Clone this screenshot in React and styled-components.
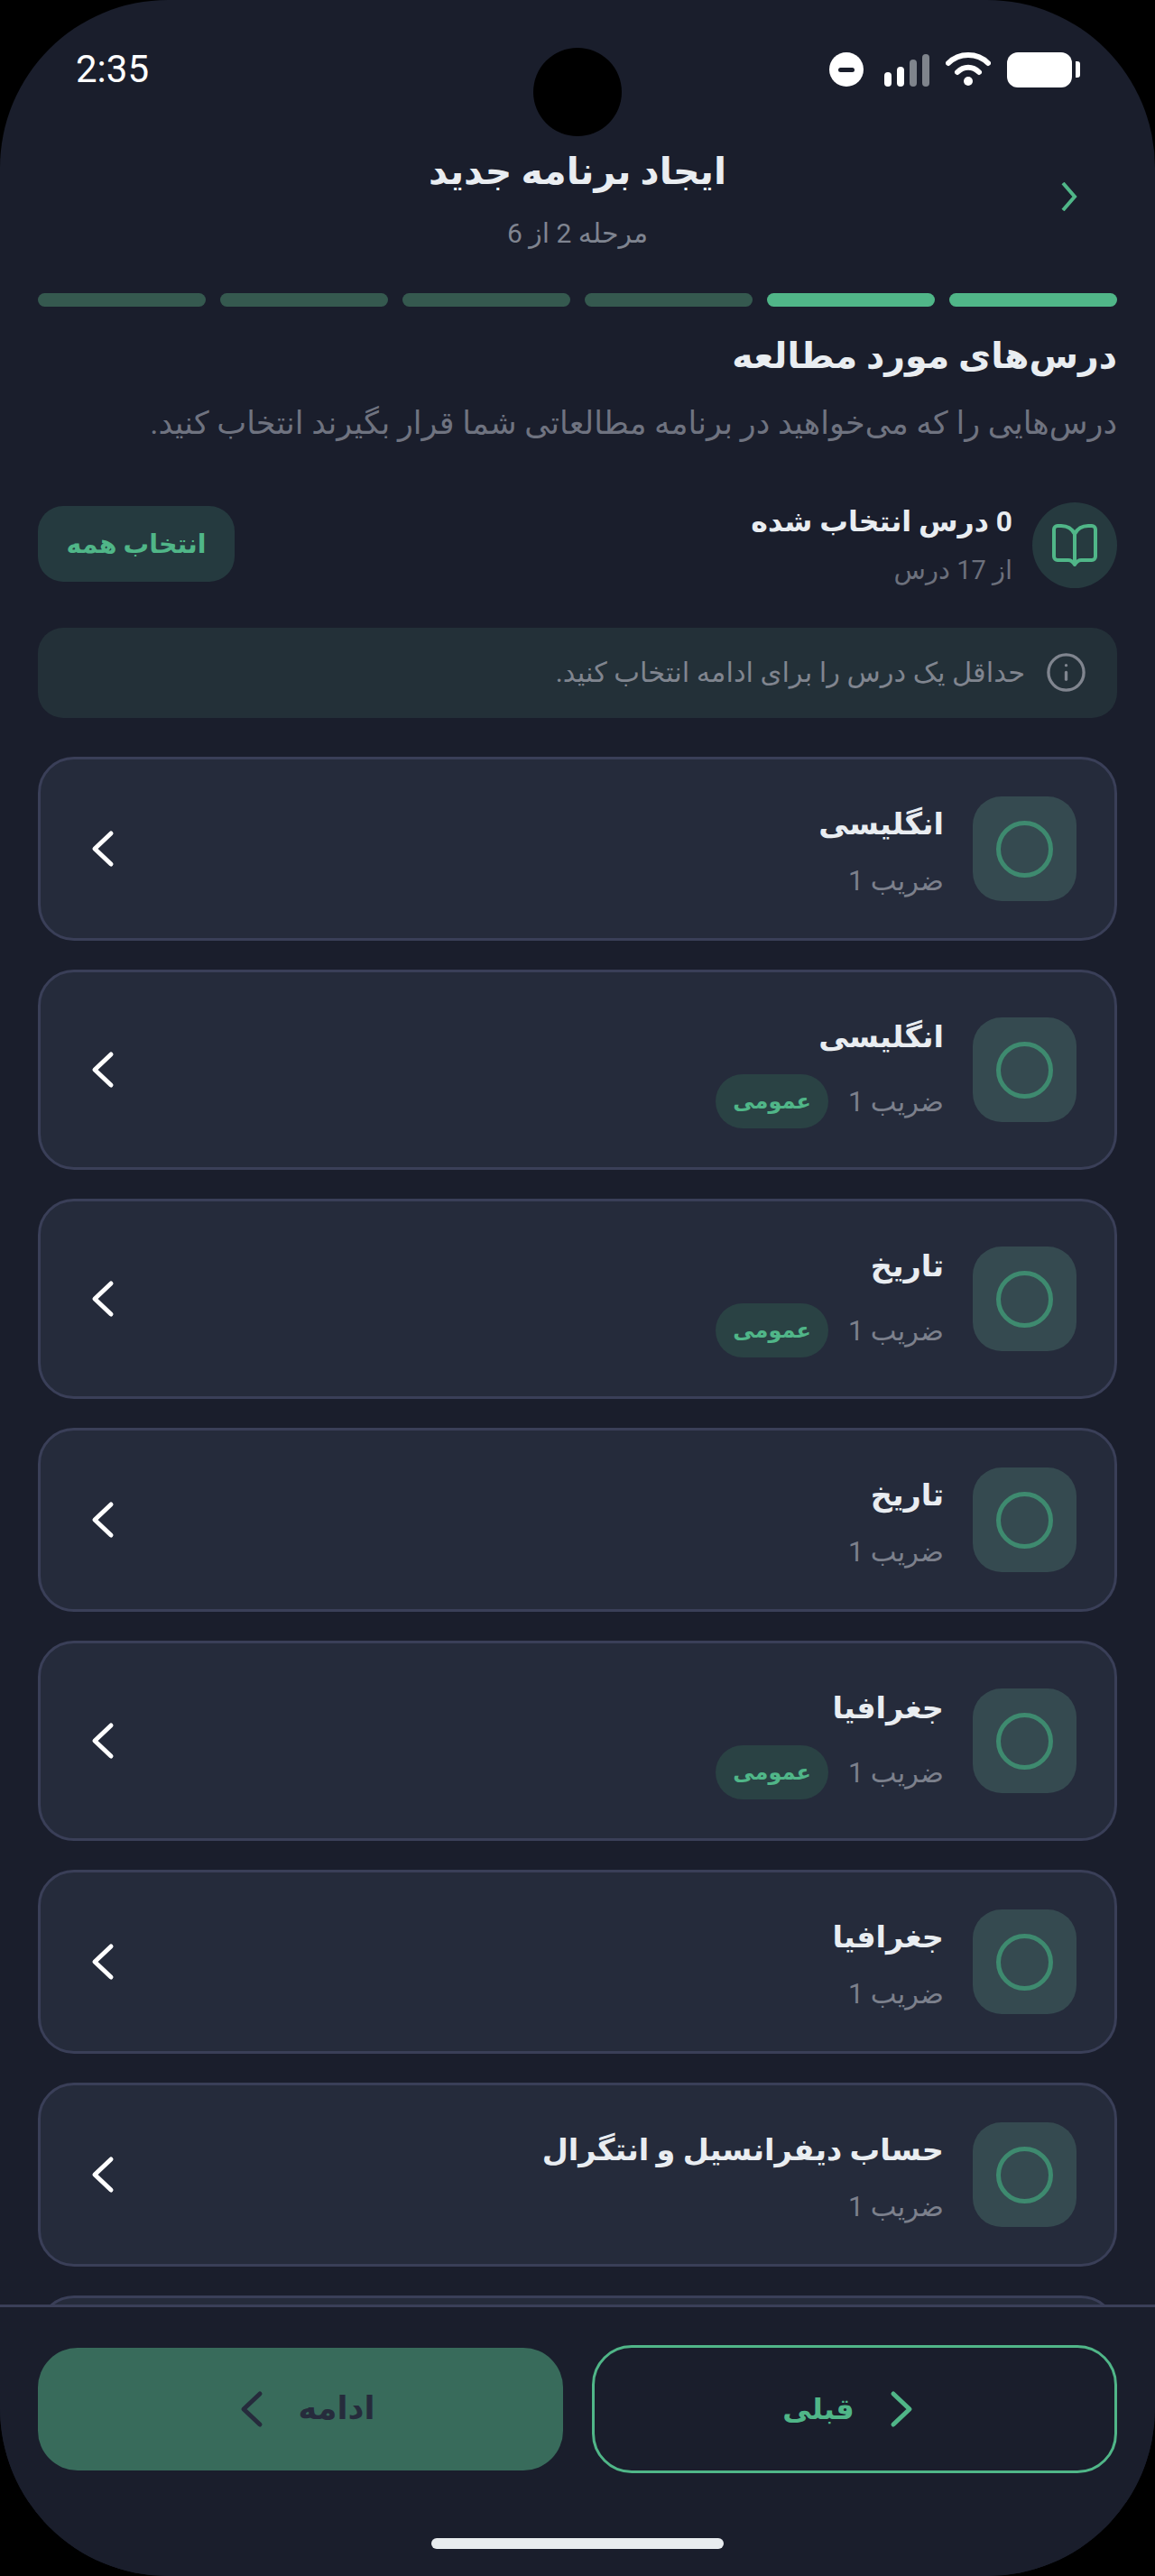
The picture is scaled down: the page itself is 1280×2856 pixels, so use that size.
import styled, { createGlobalStyle } from "styled-components";
import { Info } from "lucide-react";

const GlobalStyle = createGlobalStyle`
  html, body {
    margin: 0;
    padding: 0;
    background: #000;
  }
  * {
    box-sizing: border-box;
  }
`;

const FONT = `Roboto, "DejaVu Sans", sans-serif`;

const Screen = styled.div`
  position: relative;
  width: 1280px;
  height: 2856px;
  display: flex;
  flex-direction: column;
  overflow: hidden;
  background: #1a1e2c;
  border-radius: 186px;
  font-family: ${FONT};
  color: #e9edf1;
  direction: rtl;
`;

const Camera = styled.div`
  position: absolute;
  top: 53px;
  left: 591px;
  width: 98px;
  height: 98px;
  border-radius: 50%;
  background: #000;
`;

const StatusBar = styled.div`
  direction: ltr;
  height: 160px;
  flex-shrink: 0;
  padding: 57px 83px 0 84px;
  display: flex;
  justify-content: space-between;
  align-items: flex-start;
`;

const Time = styled.span`
  font-size: 42px;
  line-height: 40px;
  color: #fff;
`;

const StatusIcons = styled.div`
  display: flex;
  align-items: center;
  height: 40px;
  gap: 18px;
`;

const Dnd = styled.div`
  width: 38px;
  height: 38px;
  margin-right: 5px;
  border-radius: 50%;
  background: #fff;
  display: flex;
  align-items: center;
  justify-content: center;
  &::after {
    content: "";
    width: 18px;
    height: 5px;
    border-radius: 3px;
    background: #1a1e2c;
  }
`;

const Signal = styled.div`
  display: flex;
  align-items: flex-end;
  gap: 6px;
  height: 38px;
`;

const SignalBar = styled.span`
  width: 8px;
  height: ${(p) => p.$h}px;
  border-radius: 4px;
  background: ${(p) => (p.$dim ? "#7f848c" : "#fff")};
`;

const Battery = styled.div`
  display: flex;
  align-items: center;
  gap: 4px;
  &::before {
    content: "";
    width: 72px;
    height: 39px;
    border-radius: 12px;
    background: #fff;
  }
  &::after {
    content: "";
    width: 5px;
    height: 18px;
    border-radius: 0 3px 3px 0;
    background: #fff;
  }
`;

const Header = styled.header`
  height: 165px;
  flex-shrink: 0;
  padding: 0 86px;
  display: grid;
  grid-template-columns: 1fr auto 1fr;
  align-items: start;
`;

const BackButton = styled.div`
  padding-top: 42px;
  color: #50b688;
  display: flex;
`;

const HeaderText = styled.div`
  text-align: center;
`;

const HeaderTitle = styled.h1`
  margin: 0;
  font-size: 41px;
  line-height: 60px;
  font-weight: 700;
`;

const HeaderSub = styled.div`
  margin-top: 19px;
  font-size: 30px;
  line-height: 40px;
  color: #7f8490;
`;

const Progress = styled.div`
  flex-shrink: 0;
  padding: 0 42px;
  display: grid;
  grid-template-columns: repeat(6, 1fr);
  gap: 16px;
`;

const Step = styled.span`
  height: 15px;
  border-radius: 8px;
  background: ${(p) => (p.$active ? "#50b688" : "#35594f")};
`;

const Content = styled.main`
  flex: 1;
  min-height: 0;
  overflow: hidden;
  padding: 25px 42px 0;
`;

const SectionTitle = styled.h2`
  margin: 0;
  font-size: 39.5px;
  line-height: 60px;
  font-weight: 700;
`;

const SectionText = styled.p`
  margin: 21px 0 0;
  font-size: 35px;
  line-height: 48px;
  color: #6f7380;
  white-space: nowrap;
`;

const Summary = styled.div`
  margin-top: 63px;
  height: 95px;
  display: flex;
  align-items: center;
  justify-content: space-between;
`;

const SummaryInfo = styled.div`
  height: 95px;
  display: flex;
  align-items: center;
  gap: 22px;
`;

const BookBadge = styled.div`
  width: 94px;
  height: 95px;
  border-radius: 50%;
  background: #263a3f;
  display: flex;
  align-items: center;
  justify-content: center;
`;

const SummaryText = styled.div`
  padding-bottom: 4px;
`;

const SummaryTitle = styled.div`
  font-size: 31.6px;
  line-height: 50px;
  font-weight: 700;
`;

const SummarySub = styled.div`
  margin-top: 8px;
  font-size: 29px;
  line-height: 40px;
  color: #6c707c;
`;

const SelectAll = styled.button`
  width: 218px;
  height: 84px;
  margin-bottom: 3px;
  border: 0;
  border-radius: 28px;
  background: #253a3f;
  color: #50b688;
  font-family: ${FONT};
  font-size: 28.5px;
  font-weight: 700;
`;

const Notice = styled.div`
  margin-top: 44px;
  height: 100px;
  padding: 0 33px 2px;
  border-radius: 28px;
  background: #233038;
  color: #80858f;
  display: flex;
  align-items: center;
  gap: 22px;
  font-size: 30.5px;
`;

const List = styled.div`
  margin-top: 43px;
  display: flex;
  flex-direction: column;
  gap: 32px;
`;

const Card = styled.article`
  min-height: 204px;
  padding: 41px 42px 41px 41px;
  border: 3px solid #3a3f58;
  border-radius: 40px;
  background: #252b3b;
  display: flex;
  align-items: center;
  gap: 32px;
`;

const CheckTile = styled.div`
  width: 115px;
  height: 116px;
  flex-shrink: 0;
  border-radius: 32px;
  background: #354a50;
  display: flex;
  align-items: center;
  justify-content: center;
  &::after {
    content: "";
    width: 53px;
    height: 53px;
    border: 5px solid #3e8a6f;
    border-radius: 50%;
  }
`;

const CardBody = styled.div`
  flex: 1;
  min-width: 0;
`;

const CardTitle = styled.h3`
  margin: -2px 0 0;
  font-size: 33.5px;
  line-height: 66px;
  font-weight: 700;
`;

const CardMeta = styled.div`
  margin: 8px 0 2px;
  min-height: 42px;
  display: flex;
  align-items: center;
  gap: 22px;
  font-size: 30.5px;
  color: #7c808c;
`;

const Badge = styled.span`
  width: 125px;
  height: 60px;
  border-radius: 30px;
  background: #2a4244;
  color: #50b688;
  font-size: 24px;
  font-weight: 700;
  display: flex;
  align-items: center;
  justify-content: center;
`;

const CardArrow = styled.div`
  color: #fff;
  display: flex;
`;

const Footer = styled.footer`
  flex-shrink: 0;
  position: relative;
  height: 301px;
  padding: 42px 42px 0;
  border-top: 3px solid #3a3f58;
  background: #1a1e2c;
`;

const Actions = styled.div`
  display: grid;
  grid-template-columns: 1fr 1fr;
  gap: 32px;
  align-items: center;
`;

const ActionButton = styled.button`
  height: ${(p) => (p.$primary ? 136 : 142)}px;
  border: ${(p) => (p.$primary ? "0" : "3px solid #50b688")};
  border-radius: 44px;
  background: ${(p) => (p.$primary ? "#386b5b" : "transparent")};
  color: ${(p) => (p.$primary ? "#262b3c" : "#50b688")};
  font-family: ${FONT};
  font-size: ${(p) => (p.$primary ? 35 : 32)}px;
  line-height: 60px;
  font-weight: 700;
  display: flex;
  align-items: center;
  justify-content: center;
  gap: 24px;
`;

const HomeIndicator = styled.div`
  position: absolute;
  bottom: 30px;
  left: 478px;
  width: 324px;
  height: 12px;
  border-radius: 6px;
  background: #e8ecef;
`;

function Chevron({ left }) {
  return (
    <svg width="56" height="56" viewBox="0 0 56 56" fill="none">
      <polyline
        points={left ? "37,11 19,28 37,45" : "19,11 37,28 19,45"}
        stroke="currentColor"
        strokeWidth="5"
        strokeLinecap="round"
        strokeLinejoin="round"
      />
    </svg>
  );
}

function WifiIcon() {
  return (
    <svg width="50" height="38" viewBox="0 0 50 38" fill="none">
      <path d="M3 12 C15 0 35 0 47 12" stroke="#fff" strokeWidth="6" strokeLinecap="round" />
      <path d="M13 22 C20 15 30 15 37 22" stroke="#fff" strokeWidth="6" strokeLinecap="round" />
      <circle cx="25" cy="32" r="5" fill="#fff" />
    </svg>
  );
}

function BookIcon() {
  return (
    <svg width="50" height="48" viewBox="0 0 50 48" fill="none">
      <path
        d="M25 11 C22 5 17 2 10 2 H6 a4 4 0 0 0 -4 4 V36 a4 4 0 0 0 4 4 H18 C21 40 23 42 25 45 C27 42 29 40 32 40 H44 a4 4 0 0 0 4 -4 V6 a4 4 0 0 0 -4 -4 H40 C33 2 28 5 25 11 Z M25 11 V45"
        stroke="#50b688"
        strokeWidth="4"
        strokeLinejoin="round"
        strokeLinecap="round"
      />
    </svg>
  );
}

const lessons = [
  { title: "انگلیسی" },
  { title: "انگلیسی", general: true },
  { title: "تاریخ", general: true },
  { title: "تاریخ" },
  { title: "جغرافیا", general: true },
  { title: "جغرافیا" },
  { title: "حساب دیفرانسیل و انتگرال" },
];

export default function App() {
  return (
    <>
      <GlobalStyle />
      <Screen>
        <Camera />
        <StatusBar>
          <Time>2:35</Time>
          <StatusIcons>
            <Dnd />
            <Signal>
              <SignalBar $h={16} />
              <SignalBar $h={22} />
              <SignalBar $h={30} $dim />
              <SignalBar $h={36} $dim />
            </Signal>
            <WifiIcon />
            <Battery />
          </StatusIcons>
        </StatusBar>

        <Header>
          <BackButton>
            <svg width="18" height="32" viewBox="0 0 18 32" fill="none">
              <polyline points="2,1 15,16 2,31" stroke="currentColor" strokeWidth="4" />
            </svg>
          </BackButton>
          <HeaderText>
            <HeaderTitle>ایجاد برنامه جدید</HeaderTitle>
            <HeaderSub>مرحله 2 از 6</HeaderSub>
          </HeaderText>
          <span />
        </Header>

        <Progress>
          {[true, true, false, false, false, false].map((active, i) => (
            <Step key={i} $active={active} />
          ))}
        </Progress>

        <Content>
          <SectionTitle>درس‌های مورد مطالعه</SectionTitle>
          <SectionText>درس‌هایی را که می‌خواهید در برنامه مطالعاتی شما قرار بگیرند انتخاب کنید.</SectionText>

          <Summary>
            <SummaryInfo>
              <BookBadge>
                <BookIcon />
              </BookBadge>
              <SummaryText>
                <SummaryTitle>0 درس انتخاب شده</SummaryTitle>
                <SummarySub>از 17 درس</SummarySub>
              </SummaryText>
            </SummaryInfo>
            <SelectAll>انتخاب همه</SelectAll>
          </Summary>

          <Notice>
            <Info size={47} strokeWidth={1.7} />
            حداقل یک درس را برای ادامه انتخاب کنید.
          </Notice>

          <List>
            {lessons.map((lesson, i) => (
              <Card key={i}>
                <CheckTile />
                <CardBody>
                  <CardTitle>{lesson.title}</CardTitle>
                  <CardMeta>
                    ضریب 1
                    {lesson.general && <Badge>عمومی</Badge>}
                  </CardMeta>
                </CardBody>
                <CardArrow>
                  <Chevron left />
                </CardArrow>
              </Card>
            ))}
            {/* next row is only peeking out above the footer */}
            <Card />
          </List>
        </Content>

        <Footer>
          <Actions>
            <ActionButton>
              <Chevron />
              قبلی
            </ActionButton>
            <ActionButton $primary>
              ادامه
              <Chevron left />
            </ActionButton>
          </Actions>
          <HomeIndicator />
        </Footer>
      </Screen>
    </>
  );
}
